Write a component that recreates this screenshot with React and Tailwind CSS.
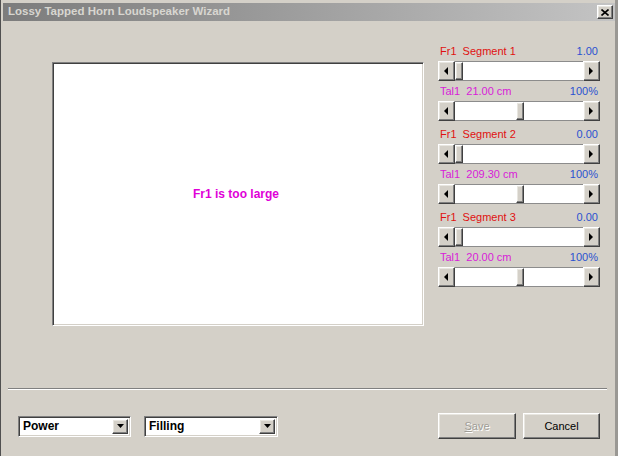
import React from "react"

const raised =
  "border border-t-[#ffffff] border-l-[#ffffff] border-r-[#404040] border-b-[#404040] shadow-[inset_-1px_-1px_#808080,inset_1px_1px_#e8e6e0] bg-[#d4d0c8]"
const sunken =
  "border border-t-[#808080] border-l-[#808080] border-r-[#ffffff] border-b-[#ffffff] shadow-[inset_1px_1px_#404040,inset_-1px_-1px_#d4d0c8]"

function Arrow({ dir }) {
  return (
    <svg width="5" height="8" viewBox="0 0 5 8">
      {dir === "left" ? <path d="M4 0 L0 4 L4 8 Z" fill="#000" /> : <path d="M0 0 L4 4 L0 8 Z" fill="#000" />}
    </svg>
  )
}

function ScrollBar({ pos }) {
  return (
    <div className="flex h-[20px] w-[162px]">
      <div className={`${raised} w-[17px] h-full flex items-center justify-center`}>
        <Arrow dir="left" />
      </div>
      <div className="flex-1 bg-white border-y border-[#8c8c8c] flex">
        <div className={pos === "mid" ? "w-[61px]" : "w-0"} />
        <div className={`${raised} w-[8px] h-full`} />
      </div>
      <div className={`${raised} w-[17px] h-full flex items-center justify-center`}>
        <Arrow dir="right" />
      </div>
    </div>
  )
}

function Label({ left, right, color }) {
  return (
    <div className="flex justify-between h-[14px] leading-[14px] text-[11px] px-[2px]">
      <span className={`whitespace-pre ${color}`}>{left}</span>
      <span className="text-[#2a52d0]">{right}</span>
    </div>
  )
}

const groups = [
  { seg: "Fr1  Segment 1", val: "1.00", tal: "Tal1  21.00 cm" },
  { seg: "Fr1  Segment 2", val: "0.00", tal: "Tal1  209.30 cm" },
  { seg: "Fr1  Segment 3", val: "0.00", tal: "Tal1  20.00 cm" },
]

function Combo({ text, w }) {
  return (
    <div className={`${sunken} bg-white h-[21px] ${w} flex items-stretch p-[2px]`}>
      <span className="flex-1 text-[12px] font-bold leading-[15px] pl-[2px] text-black">{text}</span>
      <div className={`${raised} w-[16px] flex items-center justify-center`}>
        <svg width="7" height="4" viewBox="0 0 7 4">
          <path d="M0 0 L7 0 L3.5 4 Z" fill="#000" />
        </svg>
      </div>
    </div>
  )
}

export default function App() {
  return (
    <div
      className="w-[618px] h-[456px] bg-[#d4d0c8] flex flex-col overflow-hidden border-l border-[#505050] border-r-[3px] border-r-[#9a9894] relative"
      style={{ fontFamily: '"Liberation Sans", Arial, sans-serif' }}
    >
      {/* title bar */}
      <div className="pt-[3px] pl-[2px]">
        <div className="h-[18px] flex items-center bg-gradient-to-r from-[#7c7c7c] to-[#c4c4c4] pl-[5px] pr-[2px]">
          <span className="text-[11.5px] font-bold text-[#d8d6d0] flex-1">Lossy Tapped Horn Loudspeaker Wizard</span>
          <div className={`${raised} w-[16px] h-[14px] flex items-center justify-center`}>
            <svg width="8" height="7" viewBox="0 0 8 7">
              <path d="M0.5 0.5 L7.5 6.5 M7.5 0.5 L0.5 6.5" stroke="#000" strokeWidth="1.6" />
            </svg>
          </div>
        </div>
      </div>

      {/* main */}
      <div className="flex pl-[51px]">
        <div className={`${sunken} bg-white w-[372px] h-[264px] mt-[41px] flex items-center justify-center`}>
          <span className="text-[12px] font-bold text-[#e000d8] mr-[4px]">Fr1 is too large</span>
        </div>
        <div className="ml-[14px] w-[162px] mt-[23px] flex flex-col">
          {groups.map((g, i) => (
            <div key={i} className={i > 0 ? "mt-[6px]" : ""}>
              <Label left={g.seg} right={g.val} color="text-[#e01010]" />
              <div className="mt-[3px]">
                <ScrollBar pos="start" />
              </div>
              <div className="mt-[3px]">
                <Label left={g.tal} right="100%" color="text-[#d820d8]" />
              </div>
              <div className="mt-[3px]">
                <ScrollBar pos="mid" />
              </div>
            </div>
          ))}
        </div>
      </div>

      {/* separator */}
      <div className="mt-[62px] ml-[7px] w-[599px] h-[2px] border-t border-[#808080] border-b border-b-white" />

      {/* bottom row */}
      <div className="mt-[23px] flex items-center h-[26px]">
        <div className="ml-[17px]">
          <Combo text="Power" w="w-[113px]" />
        </div>
        <div className="ml-[13px]">
          <Combo text="Filling" w="w-[134px]" />
        </div>
        <div className="ml-auto mr-[15px] flex gap-[7px]">
          <button className={`${raised} w-[78px] h-[26px] text-[11px] text-[#a09d96] [text-shadow:1px_1px_#ffffff]`}>
            <span className="underline">S</span>ave
          </button>
          <button className={`${raised} w-[77px] h-[26px] text-[11px] text-black`}>Cancel</button>
        </div>
      </div>
    </div>
  )
}
